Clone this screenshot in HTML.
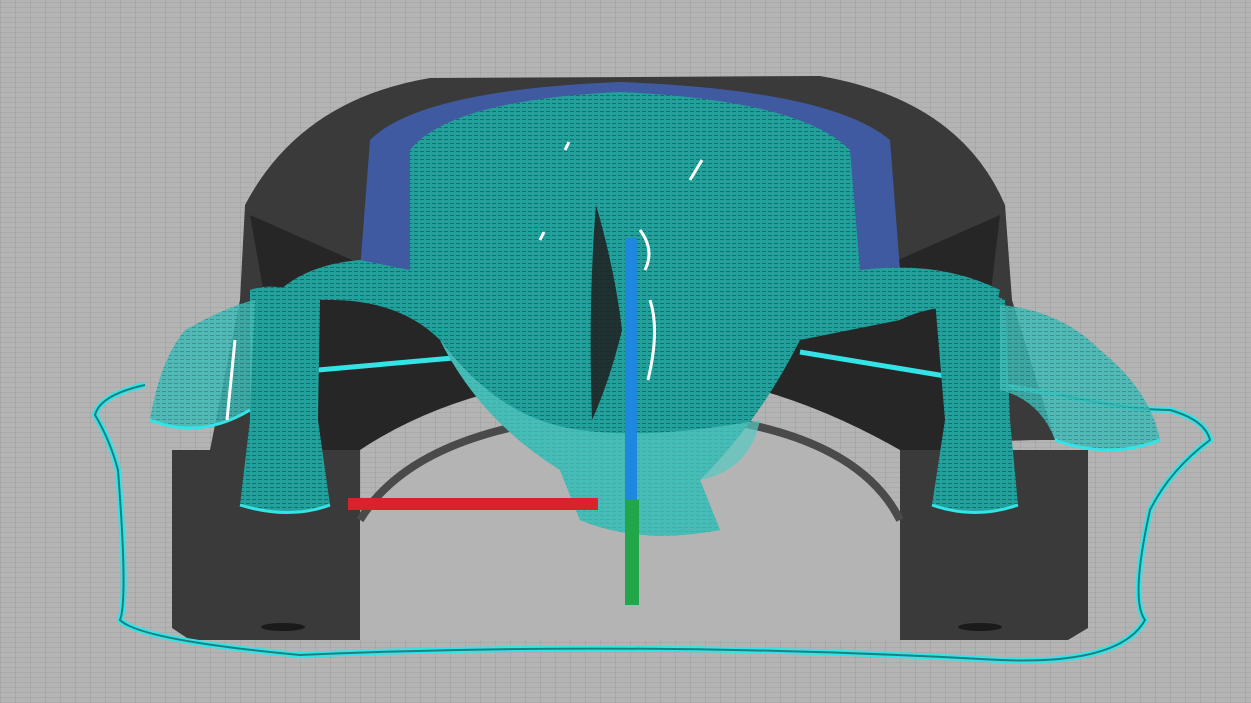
<!DOCTYPE html>
<html><head><style>
html,body{margin:0;padding:0;width:1251px;height:703px;overflow:hidden}
body{background-color:#b4b4b4;background-image:repeating-linear-gradient(0deg,rgba(0,0,0,0.05) 0 1px,transparent 1px 5px),repeating-linear-gradient(90deg,rgba(0,0,0,0.06) 0 1px,transparent 1px 15px)}
svg{position:absolute;left:0;top:0}
</style></head><body>
<svg width="1251" height="703" viewBox="0 0 1251 703">
<defs>
<pattern id="st" width="6" height="4" patternUnits="userSpaceOnUse"><rect width="6" height="4" fill="#22a09c"/><rect y="3" width="4" height="1" fill="#156e6b"/></pattern>
<pattern id="st2" width="6" height="4" patternUnits="userSpaceOnUse"><rect width="6" height="4" fill="#3fbab6"/><rect y="3" width="4" height="1" fill="#2a8c89"/></pattern>
</defs>
<path d="M245 205 Q300 100 430 78 L820 76 Q960 100 1005 205 L1012 300 L1055 440 L1045 440 Q980 440 960 450 L1088 450 L1088 628 L1068 640 L900 640 L900 450 L960 450 Q900 440 860 420 Q640 330 400 420 Q360 440 290 450 L360 450 L360 640 L190 640 L172 628 L172 450 L210 450 L240 300 Z" fill="#3a3a3a"/>
<path d="M250 215 L265 300 L250 450 L360 450 Q420 410 500 390 L420 290 Z" fill="#262626"/>
<path d="M1000 215 L990 300 L1010 450 L900 450 Q830 410 760 390 L830 290 Z" fill="#262626"/>
<path d="M360 640 L360 520 Q420 420 640 412 Q850 420 900 520 L900 640 Z" fill="#b4b4b4"/>
<path d="M360 520 Q420 420 640 412 Q850 420 900 520" fill="none" stroke="#4a4a4a" stroke-width="8"/>
<path d="M360 270 L370 140 Q420 90 620 82 Q830 90 890 140 L900 270 L850 270 L848 150 Q800 100 620 95 Q450 100 415 150 L410 270 Z" fill="#3f5aa0"/>
<path d="M318 370 L600 345 M800 352 L1060 395" stroke="#34e3e6" stroke-width="5" fill="none"/>
<path d="M145 385 Q100 395 95 415 Q110 440 118 470 Q128 600 120 620 Q140 640 300 655 Q640 640 1000 660 Q1120 665 1145 620 Q1130 600 1150 510 Q1170 470 1210 440 Q1205 420 1170 410 Q1130 410 1060 395" stroke="#34e3e6" stroke-width="6" fill="none"/>
<path d="M145 385 Q100 395 95 415 Q110 440 118 470 Q128 600 120 620 Q140 640 300 655 Q640 640 1000 660 Q1120 665 1145 620 Q1130 600 1150 510 Q1170 470 1210 440 Q1205 420 1170 410 Q1130 410 1060 395" stroke="#1e7f80" stroke-width="2" fill="none"/>
<path d="M410 150 Q450 100 620 92 Q800 100 850 150 L860 270 Q940 260 1000 290 L995 310 Q940 300 900 320 Q850 330 800 340 Q760 420 700 480 L720 530 Q640 545 580 520 L560 470 Q480 420 440 340 Q400 300 330 300 L270 300 Q300 265 360 260 L410 270 Z" fill="url(#st)"/>
<path d="M440 340 Q500 420 580 430 Q650 440 760 420 Q750 470 700 480 L720 530 Q640 545 580 520 L560 470 Q480 420 440 340Z" fill="#56c7c2" opacity="0.7"/>
<path d="M596 205 Q588 300 592 420 Q610 380 622 330 Q615 270 596 205Z" fill="#1f1f1f" opacity="0.85"/>
<path d="M250 290 Q280 280 320 300 L318 420 L330 505 Q290 520 240 505 L250 420 Z" fill="url(#st)"/>
<path d="M935 300 Q975 285 1005 300 L1010 420 L1018 505 Q975 520 932 505 L945 420 Z" fill="url(#st)"/>
<path d="M185 330 Q230 305 255 300 L250 410 Q200 440 150 420 Q160 360 185 330Z" fill="url(#st2)" opacity="0.85"/>
<path d="M1000 305 Q1060 310 1100 350 Q1150 390 1160 440 Q1110 460 1055 440 Q1040 400 1000 390Z" fill="url(#st2)" opacity="0.85"/>
<path d="M150 420 Q200 440 250 410 M240 505 Q290 520 330 505 M932 505 Q975 520 1018 505 M1055 440 Q1110 460 1160 440" stroke="#34e3e6" stroke-width="3" fill="none"/>
<path d="M640 230 Q655 250 645 270 M650 300 Q660 330 648 380 M565 150 l4 -8 M690 180 l12 -20 M540 240 l4 -8 M235 340 l-8 80" stroke="#fff" stroke-width="3" fill="none"/>
<rect x="348" y="498" width="250" height="12" fill="#d9222b"/>
<rect x="625" y="238" width="12" height="262" fill="#1e88e0"/>
<rect x="625" y="500" width="14" height="105" fill="#22a64a"/>
<ellipse cx="283" cy="627" rx="22" ry="4" fill="#1a1a1a"/>
<ellipse cx="980" cy="627" rx="22" ry="4" fill="#1a1a1a"/>
</svg>
</body></html>
